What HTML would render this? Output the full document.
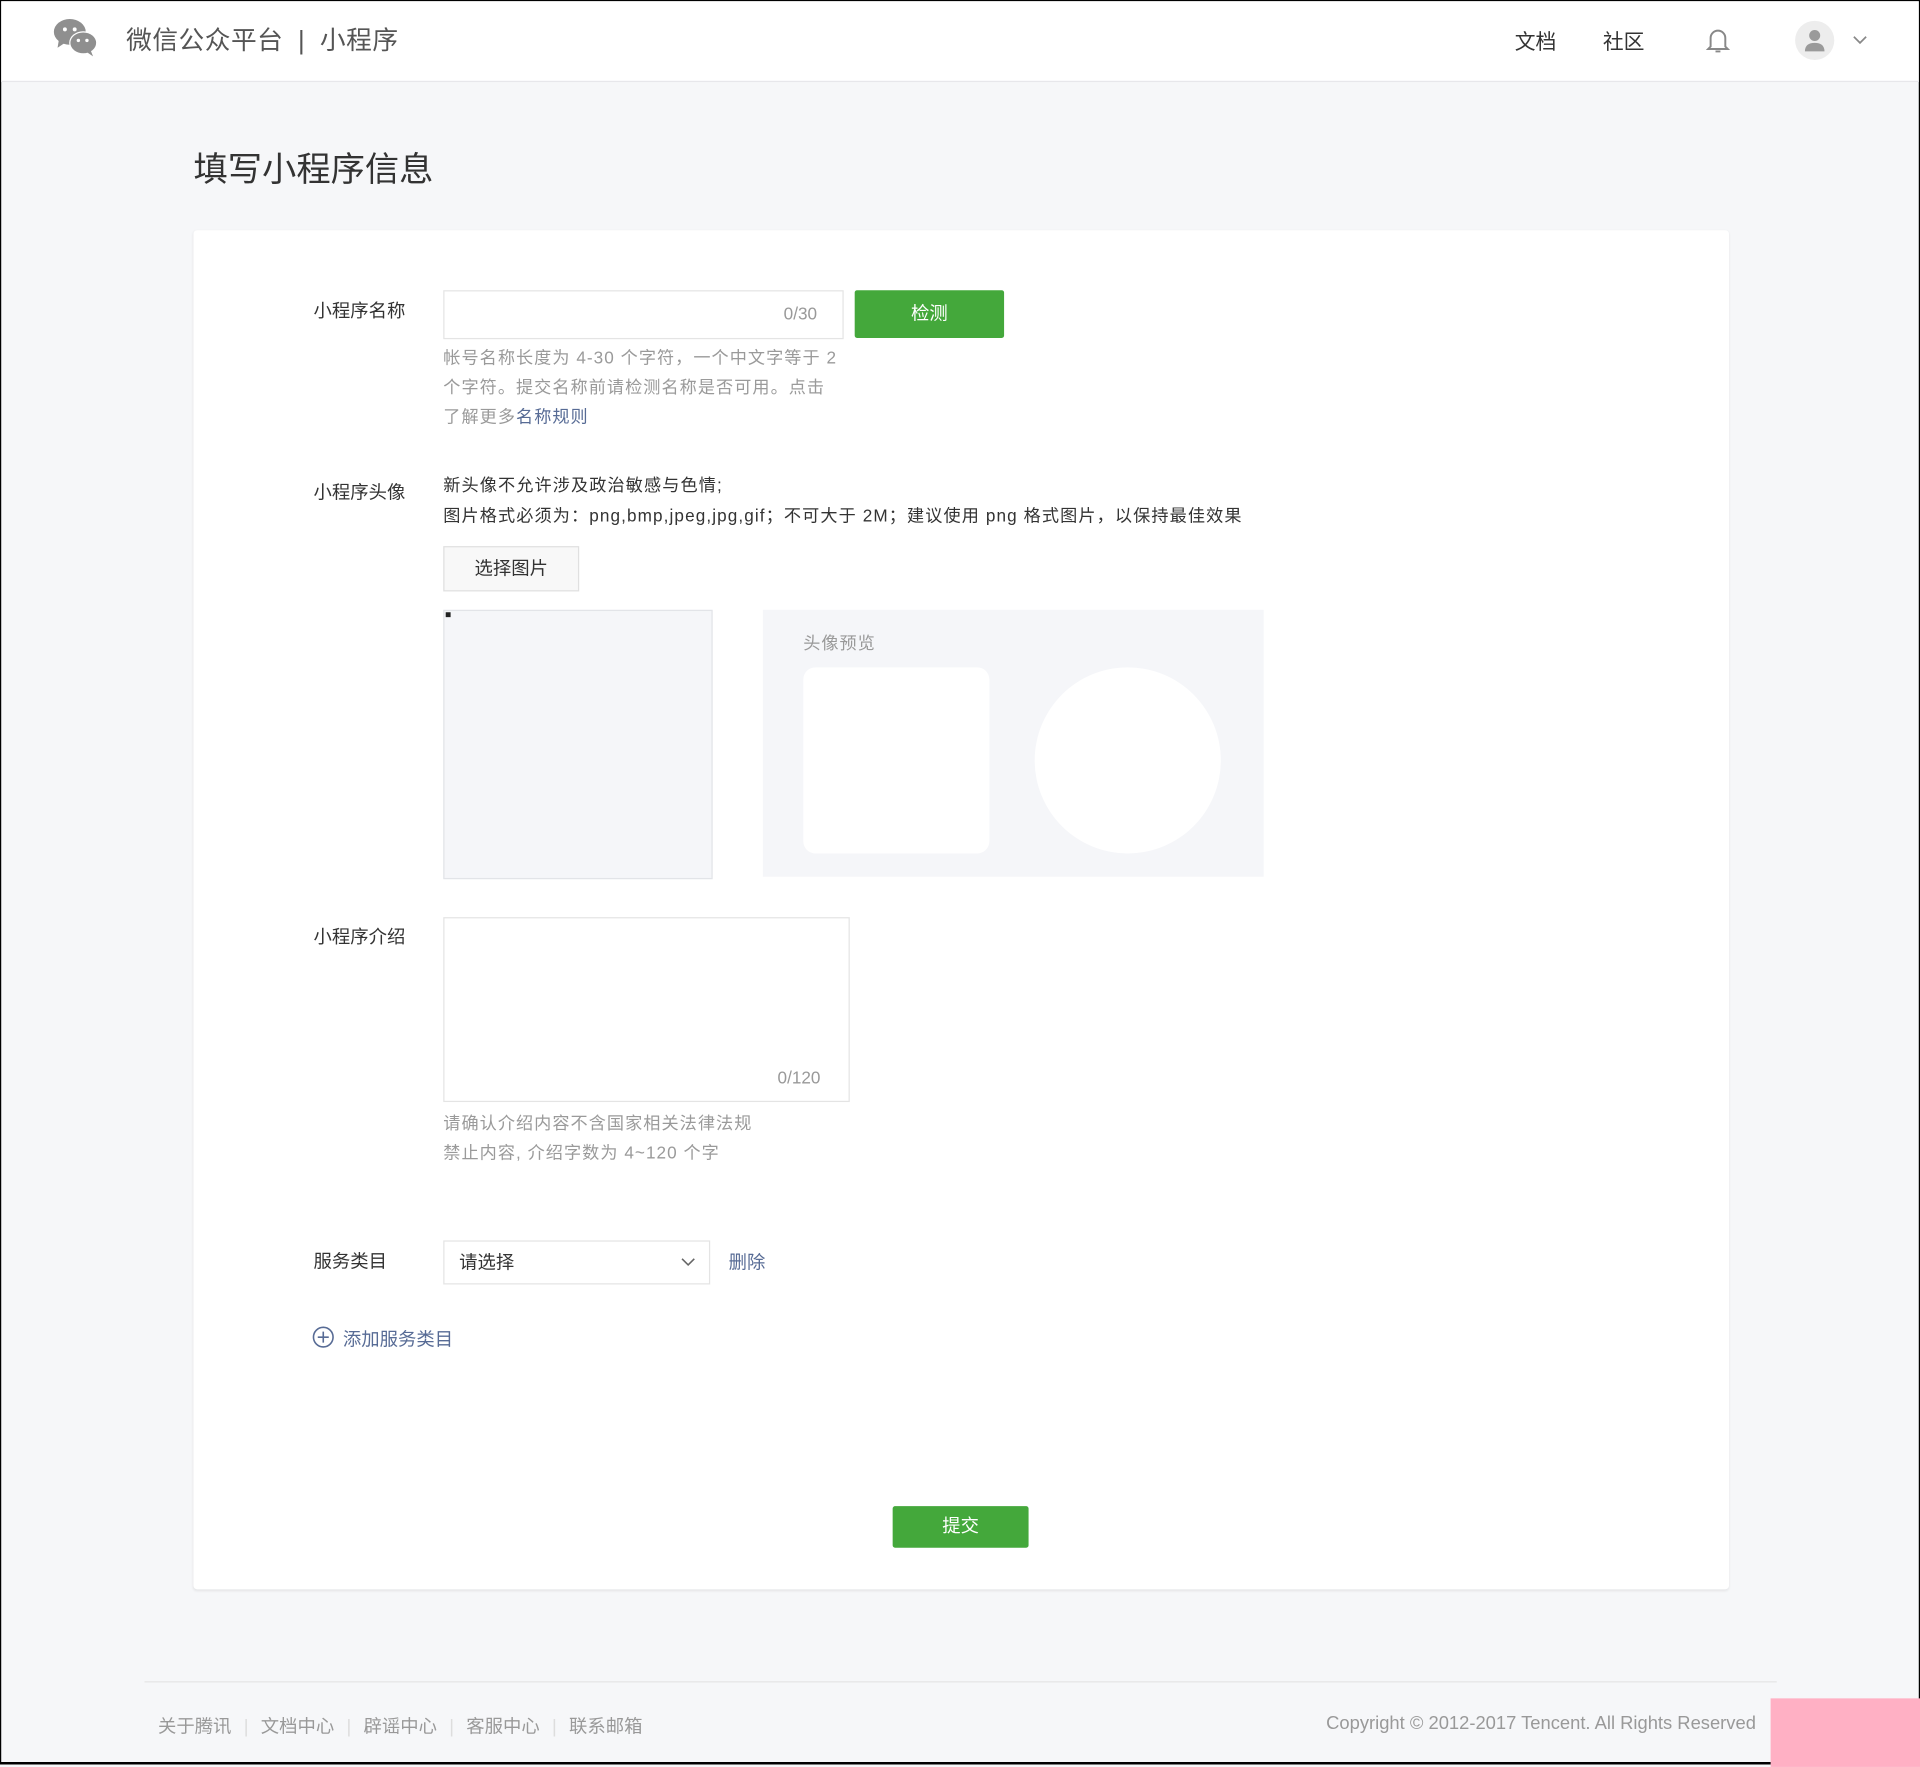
<!DOCTYPE html>
<html><head><meta charset="utf-8"><style>
html,body{margin:0;padding:0;width:1920px;height:1765px;overflow:hidden;background:#f6f7f9}
#w{position:absolute;left:0;top:0;width:1568px;height:1441px;transform:scale(1.22449);transform-origin:0 0;font-family:"Liberation Sans","Noto Sans CJK SC",sans-serif;color:#333;box-sizing:border-box;border:1px solid #000;border-bottom-width:2px;background:#f6f7f9}
.a{position:absolute;white-space:nowrap}
.hdr{position:absolute;left:0;top:0;width:1566px;height:65px;background:#fff;border-bottom:1px solid #e7e7eb}
.lbl{font-size:15px;color:#333}
.help{font-size:14px;color:#9a9a9a;line-height:24px;letter-spacing:0.85px}
</style></head><body><div id="w">
<div class="hdr">
 <svg class="a" style="left:42px;top:14px" width="38" height="32" viewBox="0 0 38 32">
  <ellipse cx="14" cy="11" rx="13" ry="10.5" fill="#8f8f8f"/><path d="M5 18 L4 24 L10 20Z" fill="#8f8f8f"/>
  <ellipse cx="25" cy="20" rx="11.5" ry="9.5" fill="#fff"/>
  <ellipse cx="25" cy="20" rx="10.5" ry="8.5" fill="#8f8f8f"/><path d="M31 26 L33 31 L27 27Z" fill="#8f8f8f"/>
  <circle cx="10" cy="9" r="1.6" fill="#fff"/><circle cx="18" cy="9" r="1.6" fill="#fff"/>
  <circle cx="21" cy="18" r="1.4" fill="#fff"/><circle cx="28" cy="18" r="1.4" fill="#fff"/>
 </svg>
 <div class="a" style="left:102px;top:16px;font-size:21px;color:#555;letter-spacing:0.4px">微信公众平台<span style="margin:0 12px">|</span>小程序</div>
 <div class="a" style="left:1236px;top:19px;font-size:17px;color:#333">文档</div>
 <div class="a" style="left:1308px;top:19px;font-size:17px;color:#333">社区</div>
 <svg class="a" style="left:1392px;top:21px" width="20" height="22" viewBox="0 0 20 22"><path d="M4 16 V9 a6 6 0 0 1 12 0 V16 l2 2 H2 Z" fill="none" stroke="#888" stroke-width="1.6"/><path d="M8 20 h4" stroke="#888" stroke-width="1.6"/></svg>
 <div class="a" style="left:1465px;top:16px;width:32px;height:32px;border-radius:50%;background:#ededed"></div>
 <svg class="a" style="left:1472px;top:22px" width="18" height="20" viewBox="0 0 18 20"><circle cx="9" cy="6" r="4.5" fill="#9a9a9a"/><path d="M1 19 q0-7 8-7 q8 0 8 7Z" fill="#9a9a9a"/></svg>
 <svg class="a" style="left:1512px;top:28px" width="12" height="8" viewBox="0 0 12 8"><path d="M1 1 L6 6 L11 1" fill="none" stroke="#888" stroke-width="1.4"/></svg>
</div>

<div class="a" style="left:157px;top:116px;font-size:28px;color:#333">填写小程序信息</div>

<div class="a" style="left:157px;top:187px;width:1254px;height:1110px;background:#fff;border-radius:3px;box-shadow:0 1px 2px rgba(0,0,0,.08)"></div>

<div class="a lbl" style="left:255px;top:242px">小程序名称</div>
<div class="a" style="left:361px;top:236px;width:325px;height:38px;border:1px solid #e4e4e4;background:#fff"></div>
<div class="a" style="left:639px;top:247px;font-size:14px;color:#999">0/30</div>
<div class="a" style="left:697px;top:236px;width:122px;height:39px;background:#44a83b;border-radius:2px;color:#fff;font-size:15px;text-align:center;line-height:39px">检测</div>
<div class="a help" style="left:361px;top:279px">帐号名称长度为 4-30 个字符，一个中文字等于 2<br>个字符。提交名称前请检测名称是否可用。点击<br>了解更多<span style="color:#576b95">名称规则</span></div>

<div class="a lbl" style="left:255px;top:390px">小程序头像</div>
<div class="a" style="left:361px;top:383px;font-size:14px;line-height:25px;color:#333;letter-spacing:0.9px">新头像不允许涉及政治敏感与色情;<br>图片格式必须为：png,bmp,jpeg,jpg,gif；不可大于 2M；建议使用 png 格式图片，以保持最佳效果</div>
<div class="a" style="left:361px;top:445px;width:109px;height:35px;border:1px solid #e0e0e0;background:#f8f8f8;font-size:15px;text-align:center;line-height:35px;color:#333">选择图片</div>
<div class="a" style="left:361px;top:497px;width:218px;height:218px;border:1px solid #e2e4e8;background:#f5f6f9"></div>
<div class="a" style="left:363px;top:499px;width:4px;height:4px;background:#222"></div>
<div class="a" style="left:622px;top:497px;width:409px;height:218px;background:#f5f6f9"></div>
<div class="a" style="left:655px;top:514px;font-size:14px;color:#999;letter-spacing:0.8px">头像预览</div>
<div class="a" style="left:655px;top:544px;width:152px;height:152px;border-radius:10px;background:#fff"></div>
<div class="a" style="left:844px;top:544px;width:152px;height:152px;border-radius:50%;background:#fff"></div>

<div class="a lbl" style="left:255px;top:753px">小程序介绍</div>
<div class="a" style="left:361px;top:748px;width:330px;height:149px;border:1px solid #e4e4e4;background:#fff"></div>
<div class="a" style="left:634px;top:871px;font-size:14px;color:#999">0/120</div>
<div class="a help" style="left:361px;top:904px">请确认介绍内容不含国家相关法律法规<br>禁止内容, 介绍字数为 4~120 个字</div>

<div class="a lbl" style="left:255px;top:1018px">服务类目</div>
<div class="a" style="left:361px;top:1012px;width:216px;height:34px;border:1px solid #e4e4e4;background:#fff"></div>
<div class="a" style="left:374px;top:1019px;font-size:15px;color:#333">请选择</div>
<svg class="a" style="left:555px;top:1026px" width="12" height="8" viewBox="0 0 12 8"><path d="M1 1 L6 6 L11 1" fill="none" stroke="#666" stroke-width="1.3"/></svg>
<div class="a" style="left:594px;top:1019px;font-size:15px;color:#576b95">删除</div>

<svg class="a" style="left:254px;top:1082px" width="18" height="18" viewBox="0 0 18 18"><circle cx="9" cy="9" r="8" fill="none" stroke="#576b95" stroke-width="1.3"/><path d="M9 4.5 V13.5 M4.5 9 H13.5" stroke="#576b95" stroke-width="1.3"/></svg>
<div class="a" style="left:279px;top:1082px;font-size:15px;color:#576b95">添加服务类目</div>

<div class="a" style="left:728px;top:1229px;width:111px;height:34px;background:#44a83b;border-radius:2px;color:#fff;font-size:15px;text-align:center;line-height:34px">提交</div>

<div class="a" style="left:117px;top:1372px;width:1333px;height:1px;background:#e5e5e5"></div>
<div class="a" style="left:128px;top:1398px;font-size:15px;color:#999">关于腾讯<span style="color:#ddd;margin:0 10px">|</span>文档中心<span style="color:#ddd;margin:0 10px">|</span>辟谣中心<span style="color:#ddd;margin:0 10px">|</span>客服中心<span style="color:#ddd;margin:0 10px">|</span>联系邮箱</div>
<div class="a" style="right:133px;top:1398px;font-size:15px;color:#999">Copyright © 2012-2017 Tencent. All Rights Reserved</div>
<div class="a" style="left:1445px;top:1386px;width:124px;height:56px;background:#ffb0c4"></div>
</div></body></html>
